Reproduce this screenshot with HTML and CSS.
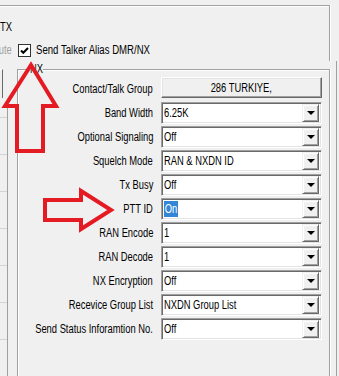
FILE: index.html
```html
<!DOCTYPE html>
<html>
<head>
<meta charset="utf-8">
<link rel="stylesheet" href="styles.css">
</head>
<body>
<div class="screen">
  <div class="group-top">
    <div class="tx"><span class="nl">TX</span></div>
    <div class="check-row">
      <span class="disabled"><span class="nr">ute</span></span>
      <span class="checkbox">
        <svg width="13" height="13" viewBox="0 0 13 13"><rect x="0.5" y="0.5" width="12" height="12" fill="#fff" stroke="#333"/><path d="M3 6.5 L5.3 8.8 L10 4" fill="none" stroke="#000" stroke-width="2"/></svg>
      </span>
      <span class="check-label nl">Send Talker Alias DMR/NX</span>
    </div>
  </div>
  <div class="lower">
    <div class="side">
      <div class="side-btn"></div>
      <div class="side-list">
        <div class="side-item"></div>
        <div class="side-item"></div>
        <div class="side-item"></div>
        <div class="side-item"></div>
        <div class="side-item"></div>
        <div class="side-item"></div>
        <div class="side-item"></div>
      </div>
    </div>
    <div class="group-nx">
      <span class="legend"><span class="nl">NX</span></span>
      <div class="form">
        <span class="lbl">Contact/Talk Group</span>
        <div class="btn"><span class="nc">286 TURKIYE,</span></div>
        <span class="lbl">Band Width</span>
        <div class="combo"><span class="val">6.25K</span><span class="drop"></span></div>
        <span class="lbl">Optional Signaling</span>
        <div class="combo"><span class="val">Off</span><span class="drop"></span></div>
        <span class="lbl">Squelch Mode</span>
        <div class="combo"><span class="val">RAN &amp; NXDN ID</span><span class="drop"></span></div>
        <span class="lbl">Tx Busy</span>
        <div class="combo"><span class="val">Off</span><span class="drop"></span></div>
        <span class="lbl">PTT ID</span>
        <div class="combo"><span class="val"><span class="sel">On</span></span><span class="drop"></span></div>
        <span class="lbl">RAN Encode</span>
        <div class="combo"><span class="val">1</span><span class="drop"></span></div>
        <span class="lbl">RAN Decode</span>
        <div class="combo"><span class="val">1</span><span class="drop"></span></div>
        <span class="lbl">NX Encryption</span>
        <div class="combo"><span class="val">Off</span><span class="drop"></span></div>
        <span class="lbl">Recevice Group List</span>
        <div class="combo"><span class="val">NXDN Group List</span><span class="drop"></span></div>
        <span class="lbl">Send Status Inforamtion No.</span>
        <div class="combo"><span class="val">Off</span><span class="drop"></span></div>
      </div>
    </div>
  </div>
  <svg class="annot" width="339" height="376" viewBox="0 0 339 376">
    <polygon points="31,65 56,106 43,106 43,151 17,151 17,106 5,106" fill="none" stroke="#e41b23" stroke-width="4"/>
    <polygon points="45,200 81,200 81,191 111,210 81,229 81,220 45,220" fill="none" stroke="#e41b23" stroke-width="4"/>
  </svg>
</div>
</body>
</html>
```
FILE: styles.css
```css
* { box-sizing: border-box; }
html, body { margin: 0; padding: 0; }
body {
  background: #f0f0f0;
  font-family: "Liberation Sans", Arial, sans-serif;
  font-size: 12px;
  color: #000;
}
.screen {
  position: relative;
  width: 339px;
  height: 376px;
  overflow: hidden;
}
/* condensed text (the reference font is narrow) */
.nl, .nr, .nc {
  display: inline-block;
  white-space: nowrap;
  transform: scaleX(0.78);
}
.nl { transform-origin: left center; }
.nr { transform-origin: right center; }
.nc { transform-origin: center center; }

.group-top {
  position: relative;
  margin-top: 5px;
  width: 330px;
  height: 56px;
  border-top: 1px solid #a0a0a0;
  border-right: 1px solid #a0a0a0;
  box-shadow: inset 0 1px 0 #fff, 1px 0 0 #fff;
  padding-top: 14px;
}
.tx {
  line-height: 14px;
  height: 14px;
}
.check-row {
  margin-top: 9px;
  display: flex;
  align-items: center;
  height: 14px;
}
.disabled {
  color: #a0a0a0;
  width: 18px;
  display: flex;
  justify-content: flex-end;
  padding-right: 6px;
}
.checkbox {
  width: 13px;
  height: 13px;
  display: flex;
}
.check-label {
  margin-left: 5px;
  transform: scaleX(0.8);
}
.lower {
  display: flex;
  height: 320px;
  width: 337px;
  border-right: 1px solid #a0a0a0;
}
.side {
  width: 8px;
  padding-top: 8px;
  display: flex;
  flex-direction: column;
}
.side-btn {
  width: 3px;
  height: 29px;
  border-top: 1px solid #fff;
  border-right: 1px solid #696969;
}
.side-list {
  margin-top: 3px;
  flex: 1;
  border-right: 1px solid #a0a0a0;
  padding-top: 16px;
}
.side-item {
  height: 37px;
  border-top: 1px solid #d4d4d4;
}
.group-nx {
  position: relative;
  margin-left: 9px;
  margin-top: 8px;
  width: 313px;
  border-left: 1px solid #a0a0a0;
  border-top: 1px solid #a0a0a0;
  border-right: 1px solid #a0a0a0;
  box-shadow: inset 1px 1px 0 #fff, 1px 0 0 #fff;
}
.legend {
  position: absolute;
  top: -8px;
  left: 11px;
  width: 14px;
  background: #f0f0f0;
  line-height: 14px;
  padding-left: 1px;
}
.form {
  display: grid;
  grid-template-columns: 135px 161px;
  column-gap: 8px;
  row-gap: 2px;
  padding-top: 7px;
}
.lbl {
  justify-self: end;
  width: max-content;
  align-self: center;
  white-space: nowrap;
  line-height: 14px;
  transform: scaleX(0.78);
  transform-origin: right center;
}
.btn {
  height: 21px;
  margin-bottom: 2px;
  background: #f0f0f0;
  border-top: 1px solid #fff;
  border-left: 1px solid #fff;
  border-right: 1px solid #696969;
  border-bottom: 1px solid #696969;
  box-shadow: inset -1px -1px 0 #a0a0a0, inset 1px 1px 0 #e3e3e3;
  display: flex;
  align-items: center;
  justify-content: center;
}
.combo {
  height: 22px;
  background: #fff;
  border-top: 1px solid #a0a0a0;
  border-left: 1px solid #a0a0a0;
  border-right: 1px solid #fff;
  border-bottom: 1px solid #fff;
  box-shadow: inset 1px 1px 0 #696969, inset -1px -1px 0 #e3e3e3;
  display: flex;
  align-items: center;
  padding: 2px;
}
.val {
  flex: 1;
  padding-left: 0;
  line-height: 14px;
  white-space: nowrap;
  transform: scaleX(0.78);
  transform-origin: left center;
}
.sel {
  background: #3385d6;
  color: #fff;
  padding: 1px 1px;
}
.drop {
  flex: none;
  width: 17px;
  height: 18px;
  background: #f0f0f0;
  border-top: 1px solid #f0f0f0;
  border-left: 1px solid #f0f0f0;
  border-right: 1px solid #696969;
  border-bottom: 1px solid #696969;
  box-shadow: inset 1px 1px 0 #fff, inset -1px -1px 0 #a0a0a0;
  display: flex;
  align-items: center;
  justify-content: center;
}
.drop::after {
  content: "";
  width: 0;
  height: 0;
  border-left: 4px solid transparent;
  border-right: 4px solid transparent;
  border-top: 4px solid #000;
}
.annot {
  position: absolute;
  top: 0;
  left: 0;
  pointer-events: none;
}
```
